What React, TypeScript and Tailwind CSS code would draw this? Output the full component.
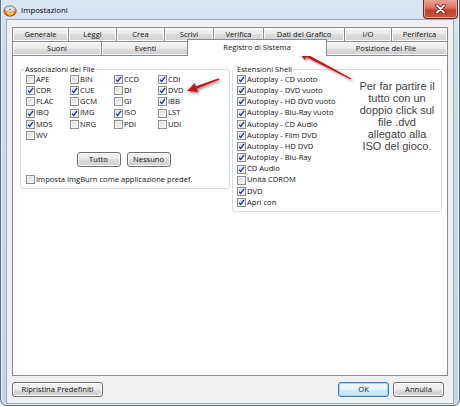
import React from "react";

const BTN =
  "bg-[linear-gradient(to_bottom,#f2f2f2_0%,#ebebeb_50%,#dddddd_50%,#cfcfcf_100%)] border border-[#707070] rounded-[3px] shadow-[inset_0_0_0_1px_#fbfbfb]";

function Check({ checked }: { checked: boolean }) {
  return (
    <span className="inline-flex items-center justify-center w-[9px] h-[9px] shrink-0 border border-[#8e8f8f] bg-[linear-gradient(135deg,#d6d6d6,#fbfbfb)] shadow-[inset_0_0_0_1px_#f2f2f2]">
      {checked && (
        <svg width="7" height="7" viewBox="0 0 7 7">
          <path d="M1 3.6 L2.7 5.5 L6.1 0.9" fill="none" stroke="#1d3b8c" strokeWidth="1.35" />
        </svg>
      )}
    </span>
  );
}

function CB({ label, checked }: { label: string; checked: boolean }) {
  return (
    <div className="flex items-center h-[11.2px] whitespace-nowrap">
      <Check checked={checked} />
      <span className="ml-[1px] leading-none">{label}</span>
    </div>
  );
}

function arrow(x1: number, y1: number, x2: number, y2: number) {
  const hl = 10,
    hw = 4.8,
    s1 = 0.7,
    s2 = 1.4;
  const dx = x2 - x1,
    dy = y2 - y1,
    L = Math.hypot(dx, dy);
  const ux = dx / L,
    uy = dy / L;
  const nx = -uy,
    ny = ux;
  const bx = x2 - ux * hl,
    by = y2 - uy * hl;
  const p = (x: number, y: number) => `${x.toFixed(2)},${y.toFixed(2)}`;
  return [
    p(x1 + nx * s1, y1 + ny * s1),
    p(bx + nx * s2, by + ny * s2),
    p(bx + nx * hw, by + ny * hw),
    p(x2, y2),
    p(bx - nx * hw, by - ny * hw),
    p(bx - nx * s2, by - ny * s2),
    p(x1 - nx * s1, y1 - ny * s1),
  ].join(" ");
}

const files: [string, boolean][] = [
  ["APE", false], ["BIN", false], ["CCD", true], ["CDI", true],
  ["CDR", true], ["CUE", true], ["DI", false], ["DVD", true],
  ["FLAC", false], ["GCM", false], ["GI", false], ["IBB", true],
  ["IBQ", true], ["IMG", true], ["ISO", true], ["LST", false],
  ["MDS", true], ["NRG", false], ["PDI", false], ["UDI", false],
  ["WV", false],
];

const shell: [string, boolean][] = [
  ["Autoplay - CD vuoto", true],
  ["Autoplay - DVD vuoto", true],
  ["Autoplay - HD DVD vuoto", true],
  ["Autoplay - Blu-Ray vuoto", true],
  ["Autoplay - CD Audio", true],
  ["Autoplay - Film DVD", true],
  ["Autoplay - HD DVD", true],
  ["Autoplay - Blu-Ray", true],
  ["CD Audio", true],
  ["Unità CDROM", false],
  ["DVD", true],
  ["Apri con", true],
];

const TAB =
  "h-[14px] flex items-center justify-center border-x border-t border-[#898c95] bg-[linear-gradient(to_bottom,#f2f2f2_0%,#ebebeb_50%,#dddddd_50%,#cfcfcf_100%)] shadow-[inset_0_0_0_1px_#f8f8f8] whitespace-nowrap";

export default function App() {
  return (
    <div className="relative w-[460px] h-[407px] bg-white overflow-hidden font-['Open_Sans',sans-serif] text-[7.6px] text-[#111]">
      <div className="w-[460px] h-[406px] flex flex-col border-x border-b border-[#5e6e83] rounded-b-[7px] bg-[linear-gradient(to_bottom,#dbe6f3_0%,#cddcee_12%,#c4d5ea_100%)] shadow-[inset_1px_0_0_#e8f0f8,inset_-1px_0_0_#e8f0f8,inset_0_-1px_0_#e8f0f8]">
        {/* title bar */}
        <div className="h-[19px] shrink-0 flex items-start">
          <svg className="ml-[2px] mt-[3px]" width="14" height="14" viewBox="0 0 14 14">
            <defs>
              <linearGradient id="ic" x1="0" y1="0" x2="0" y2="1">
                <stop offset="0" stopColor="#d9d9d9" />
                <stop offset="0.45" stopColor="#9a9a9a" />
                <stop offset="0.55" stopColor="#e8841c" />
                <stop offset="1" stopColor="#c53a0c" />
              </linearGradient>
            </defs>
            <ellipse cx="7" cy="8" rx="6.3" ry="5.2" fill="url(#ic)" stroke="#6b4a2a" strokeWidth="0.6" />
            <ellipse cx="7" cy="6.5" rx="4.6" ry="2.4" fill="#e9e9e9" opacity="0.8" />
            <ellipse cx="7" cy="6.5" rx="1.2" ry="0.7" fill="#777" />
            <path d="M3 10 Q5 7.5 7 10 Q9 7.5 11 10 Q9 13 7 12.6 Q5 13 3 10Z" fill="#ffd23a" opacity="0.85" />
          </svg>
          <span className="ml-[4px] mt-[4px] text-[7.8px] leading-[12px] text-black">Impostazioni</span>
          <div className="ml-auto mr-[1px] w-[35px] h-[19px] rounded-b-[4px] border border-t-0 border-[#6a2a22] bg-[linear-gradient(to_bottom,#e8a898_0%,#d7705c_45%,#c2402a_55%,#c9553c_100%)] shadow-[inset_0_0_0_1px_#e9a08f] flex items-center justify-center">
            <svg width="11" height="10" viewBox="0 0 11 10">
              <path d="M2 1.5 L9 8.5 M9 1.5 L2 8.5" stroke="#5b2018" strokeWidth="3.4" strokeLinecap="round" />
              <path d="M2 1.5 L9 8.5 M9 1.5 L2 8.5" stroke="#ffffff" strokeWidth="1.8" strokeLinecap="round" />
            </svg>
          </div>
        </div>

        {/* client area */}
        <div className="flex-1 mx-[5px] mb-[1px] border border-[#9aaabf] bg-[#f0f0f0] flex flex-col px-[5px] pt-[7px]">
          {/* tab rows */}
          <div className="flex">
            <div className={`${TAB} w-[57px]`}>Generale</div>
            <div className={`${TAB} w-[49px] -ml-px`}>Leggi</div>
            <div className={`${TAB} w-[49px] -ml-px`}>Crea</div>
            <div className={`${TAB} w-[50px] -ml-px`}>Scrivi</div>
            <div className={`${TAB} w-[51px] -ml-px`}>Verifica</div>
            <div className={`${TAB} w-[82px] -ml-px`}>Dati del Grafico</div>
            <div className={`${TAB} w-[48px] -ml-px`}>I/O</div>
            <div className={`${TAB} w-[57px] -ml-px`}>Periferica</div>
          </div>
          <div className="flex items-end h-[14px]">
            <div className={`${TAB} w-[90px]`}>Suoni</div>
            <div className={`${TAB} w-[89px] -ml-px`}>Eventi</div>
            <div className="relative z-10 w-[140px] h-[17px] -ml-[3px] -mb-px pb-[1px] flex items-center justify-center border-x border-t border-[#898c95] bg-white whitespace-nowrap">
              Registro di Sistema
            </div>
            <div className={`${TAB} w-[124px] -ml-[3px]`}>Posizione dei File</div>
          </div>

          {/* panel */}
          <div className="h-[321px] shrink-0 border border-[#898c95] bg-white flex items-start pl-[7px]">
            <fieldset className="w-[210px] mt-[8px] border border-[#d5dfe5] rounded-[3px] pl-[3px] pr-[3px] pb-[3px]">
              <legend className="px-[1px] leading-[10px]">Associazioni dei File</legend>
              <div className="ml-[2px] grid grid-cols-[44px_44px_44px_44px]">
                {files.map(([l, c]) => (
                  <CB key={l} label={l} checked={c} />
                ))}
              </div>
              <div className="flex justify-center gap-[6px] pr-[3px] mt-[11px]">
                <div className={`${BTN} w-[44px] h-[15px] flex items-center justify-center`}>Tutto</div>
                <div className={`${BTN} w-[44px] h-[15px] flex items-center justify-center`}>Nessuno</div>
              </div>
              <div className="ml-[2px] mt-[7px]">
                <CB label="Imposta ImgBurn come applicazione predef." checked={false} />
              </div>
            </fieldset>
            <fieldset className="w-[210px] ml-[2px] mt-[8px] border border-[#d5dfe5] rounded-[3px] pl-[3px] pr-[3px] pb-[3px]">
              <legend className="px-[1px] leading-[10px]">Estensioni Shell</legend>
              <div className="ml-[1px] flex flex-col">
                {shell.map(([l, c]) => (
                  <CB key={l} label={l} checked={c} />
                ))}
              </div>
            </fieldset>
          </div>

          {/* bottom buttons */}
          <div className="mt-[6px] h-[15px] flex pr-[4px]">
            <div className={`${BTN} w-[91px] h-[15px] flex items-center justify-center`}>Ripristina Predefiniti</div>
            <div className="ml-auto w-[51px] h-[15px] rounded-[3px] border border-[#3c7fb1] bg-[linear-gradient(to_bottom,#f3f9fd_0%,#e6f3fb_50%,#d4ebf9_50%,#c8e4f7_100%)] shadow-[inset_0_0_0_1px_#9fd5f4] flex items-center justify-center">
              OK
            </div>
            <div className={`${BTN} ml-[4px] w-[51px] h-[15px] flex items-center justify-center`}>Annulla</div>
          </div>
        </div>
      </div>

      {/* annotation text */}
      <div className="absolute left-[352px] top-[81px] w-[90px] text-center font-['Liberation_Sans',Arial,sans-serif] text-[11px] leading-[11.9px] text-[#444]">
        Per far partire il
        <br />
        tutto con un
        <br />
        doppio click sul
        <br />
        file .dvd
        <br />
        allegato alla
        <br />
        ISO del gioco.
      </div>

      {/* arrows */}
      <svg className="absolute inset-0 pointer-events-none" width="460" height="407">
        <defs>
          <filter id="sh" x="-20%" y="-20%" width="140%" height="140%">
            <feDropShadow dx="1.5" dy="1.5" stdDeviation="0.9" floodColor="#000" floodOpacity="0.45" />
          </filter>
        </defs>
        <polygon points={arrow(219, 79, 187, 91)} fill="#c4161c" filter="url(#sh)" />
        <polygon points={arrow(351, 79, 298, 51)} fill="#c4161c" filter="url(#sh)" />
      </svg>
    </div>
  );
}
